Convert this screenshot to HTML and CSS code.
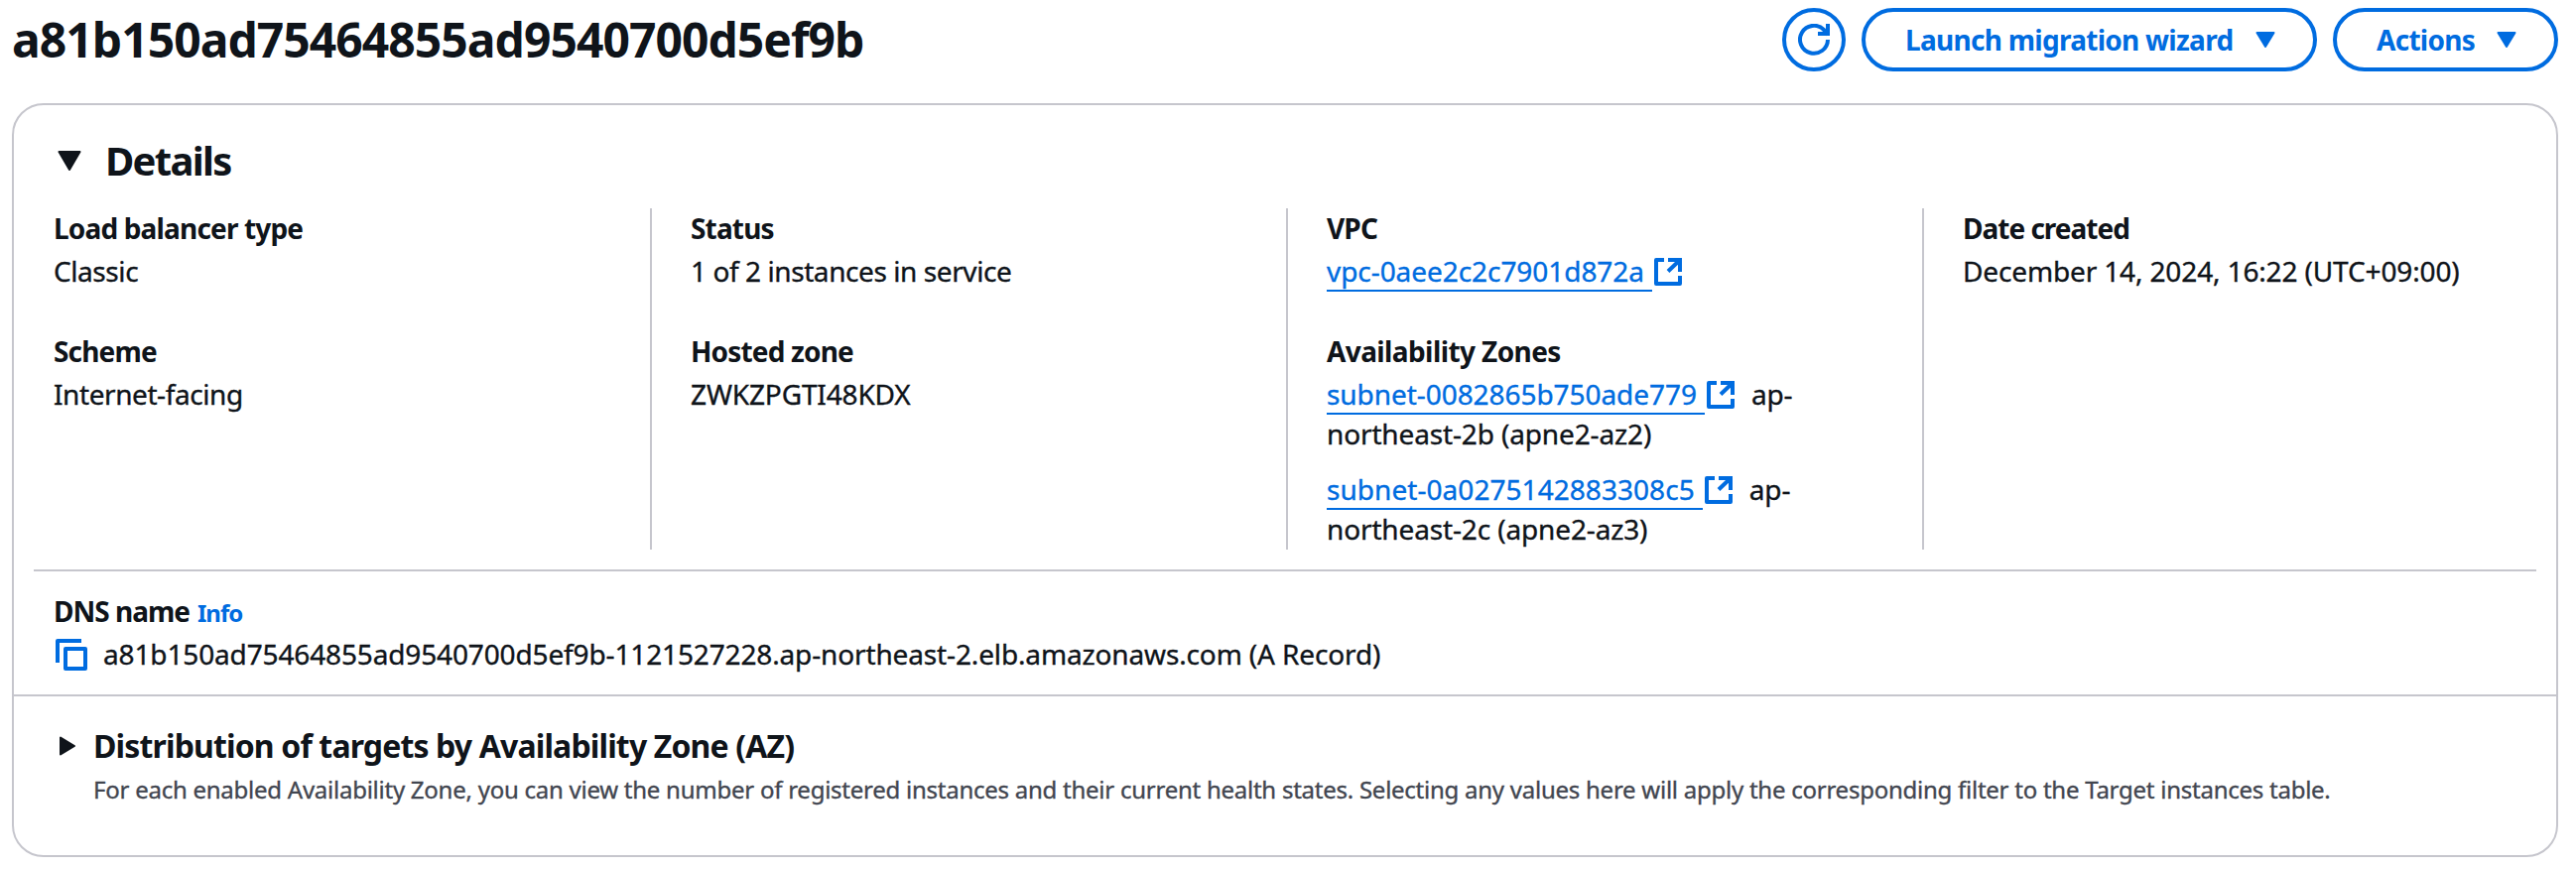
FILE: index.html
```html
<!DOCTYPE html>
<html lang="en">
<head>
<meta charset="utf-8">
<title>Load balancer details</title>
<link rel="stylesheet" href="styles.css">
</head>
<body>
<svg class="defs" width="0" height="0" aria-hidden="true">
  <symbol id="external" viewBox="0 0 28 28">
    <path d="M10 2H2v24h24v-8" fill="none" stroke="currentColor" stroke-width="4" stroke-linejoin="round"/>
    <path d="M14 2h12v12M25 3 14 13.500" fill="none" stroke="currentColor" stroke-width="4"/>
  </symbol>
</svg>
<header class="page-header">
  <h1 class="title">a81b150ad75464855ad9540700d5ef9b</h1>
  <div class="actions">
    <button class="btn btn-icon" aria-label="Refresh">
      <svg class="refresh" width="32" height="32" viewBox="0 0 32 32" fill="none" stroke="currentColor" stroke-width="4"><path d="M30 16a14 14 0 1 1-4-10l4 5"/><path d="M30 0v10H20"/></svg>
    </button>
    <button class="btn btn-launch"><span class="btn-text">Launch migration wizard</span><svg width="20" height="16" viewBox="0 0 20 16"><path d="M1.500 1h17L10 15z" fill="currentColor" stroke="currentColor" stroke-width="2" stroke-linejoin="round"/></svg></button>
    <button class="btn btn-actions"><span class="btn-text">Actions</span><svg width="20" height="16" viewBox="0 0 20 16"><path d="M1.500 1h17L10 15z" fill="currentColor" stroke="currentColor" stroke-width="2" stroke-linejoin="round"/></svg></button>
  </div>
</header>
<main class="card">
  <div class="details-head">
    <svg width="24" height="20" viewBox="0 0 24 20"><path d="M1.500 1h21L12 19z" fill="currentColor" stroke="currentColor" stroke-width="2" stroke-linejoin="round"/></svg>
    <h2>Details</h2>
  </div>
  <div class="columns">
    <div class="col">
      <div class="field"><div class="label">Load balancer type</div><div class="value value-prose">Classic</div></div>
      <div class="field"><div class="label">Scheme</div><div class="value value-prose">Internet-facing</div></div>
    </div>
    <div class="col">
      <div class="field"><div class="label">Status</div><div class="value value-prose">1 of 2 instances in service</div></div>
      <div class="field"><div class="label">Hosted zone</div><div class="value">ZWKZPGTI48KDX</div></div>
    </div>
    <div class="col">
      <div class="field"><div class="label">VPC</div><div class="value"><a class="link">vpc-0aee2c2c7901d872a</a><svg class="ext"><use href="#external"/></svg></div></div>
      <div class="field"><div class="label label-zones">Availability Zones</div>
        <div class="value"><a class="link">subnet-0082865b750ade779</a><svg class="ext"><use href="#external"/></svg><span class="az">ap-</span><br>northeast-2b (apne2-az2)</div>
        <div class="value value-next"><a class="link">subnet-0a0275142883308c5</a><svg class="ext"><use href="#external"/></svg><span class="az">ap-</span><br>northeast-2c (apne2-az3)</div>
      </div>
    </div>
    <div class="col">
      <div class="field"><div class="label label-date">Date created</div><div class="value">December 14, 2024, 16:22 (UTC+09:00)</div></div>
    </div>
  </div>
  <section class="dns">
    <div class="label label-date">DNS name<a class="info">Info</a></div>
    <div class="dns-value">
      <svg width="32" height="32" viewBox="0 0 32 32" fill="none" stroke="currentColor" stroke-width="4" stroke-linejoin="round"><path d="M26 2H2v22"/><path d="M10 10h20v20H10z"/></svg>
      <span class="value">a81b150ad75464855ad9540700d5ef9b-1121527228.ap-northeast-2.elb.amazonaws.com (A Record)</span>
    </div>
  </section>
  <section class="distribution">
    <svg width="16" height="20" viewBox="0 0 16 20"><path d="M1 1.500v17L15 10z" fill="currentColor" stroke="currentColor" stroke-width="2" stroke-linejoin="round"/></svg>
    <div>
      <h3>Distribution of targets by Availability Zone (AZ)</h3>
      <p class="desc">For each enabled Availability Zone, you can view the number of registered instances and their current health states. Selecting any values here will apply the corresponding filter to the Target instances table.</p>
    </div>
  </section>
</main>
</body>
</html>
```

FILE: styles.css
```css
* { box-sizing: border-box; }
body { margin: 0; padding: 8px 18px 12px 12px; height: 876px; background: #fff; color: #0f141a; font-family: "Noto Sans", "Open Sans", sans-serif; font-size: 28px; line-height: 40px; }
h1, h2, h3, p { margin: 0; }
svg { display: block; flex: none; }
.defs { position: absolute; }
.page-header { display: flex; justify-content: space-between; height: 64px; margin-bottom: 32px; }
.title { font-size: 48px; line-height: 64px; font-weight: 700; letter-spacing: -0.96px; }
.actions { display: flex; gap: 16px; }
.btn { display: flex; align-items: center; justify-content: space-between; height: 64px; border: 4px solid #006ce0; border-radius: 32px; background: #fff; color: #006ce0; padding: 0 38px 0 40px; font: 700 28px/40px "Noto Sans", "Open Sans", sans-serif; letter-spacing: -0.72px; white-space: nowrap; }
.btn-icon { width: 64px; padding: 0; justify-content: center; }
.btn-launch { width: 459px; }
.btn-actions { width: 227px; }
.card { height: 760px; border: 2px solid #c6c6cd; border-radius: 32px; padding-top: 32px; }
.details-head { display: flex; align-items: center; gap: 24px; padding-left: 44px; height: 48px; }
h2 { font-size: 40px; line-height: 48px; letter-spacing: -1.7px; }
.columns { display: grid; grid-template-columns: 641px 641px 641px 1fr; height: 344px; margin-top: 24px; }
.col { display: flex; flex-direction: column; gap: 40px; padding-left: 39px; border-left: 2px solid #c6c6cd; }
.col:first-child { padding-left: 38px; border-left-color: transparent; }
.label { font-weight: 700; height: 40px; letter-spacing: -0.83px; white-space: nowrap; }
.label-zones { letter-spacing: -0.6px; }
.label-date { letter-spacing: -1px; }
.value { -webkit-text-stroke: 0.35px currentColor; letter-spacing: -0.14px; white-space: nowrap; }
.value-prose { letter-spacing: -0.42px; }
.field { height: 84px; }
.field .value { margin-top: 3px; }
.field .value-next { margin-top: 16px; }
.link { color: #006ce0; border-bottom: 2px solid #006ce0; padding-right: 8px; letter-spacing: -0.06px; }
.value-next .link { letter-spacing: 0.05px; }
.ext { display: inline-block; width: 28px; height: 28px; margin-left: 2px; vertical-align: -4px; color: #006ce0; }
.az { margin-left: 17px; }
.dns { margin: 20px 20px 0; border-top: 2px solid #c6c6cd; padding: 20px 20px 0; height: 126px; }
.info { margin-left: 8px; font-size: 24px; color: #006ce0; letter-spacing: -1px; }
.dns-value { display: flex; align-items: center; gap: 16px; height: 40px; margin-top: 4px; padding-left: 2px; }
.dns-value svg { color: #006ce0; }
.dns-value .value { margin-top: -2px; }
.distribution { display: flex; gap: 18px; border-top: 2px solid #c6c6cd; padding: 30px 0 0 46px; }
.distribution > svg { margin-top: 10px; }
h3 { font-size: 32px; line-height: 40px; letter-spacing: -0.86px; }
.desc { color: #424650; font-size: 24px; -webkit-text-stroke: 0.35px currentColor; line-height: 40px; letter-spacing: -0.25px; margin-top: 4px; white-space: nowrap; }
```
